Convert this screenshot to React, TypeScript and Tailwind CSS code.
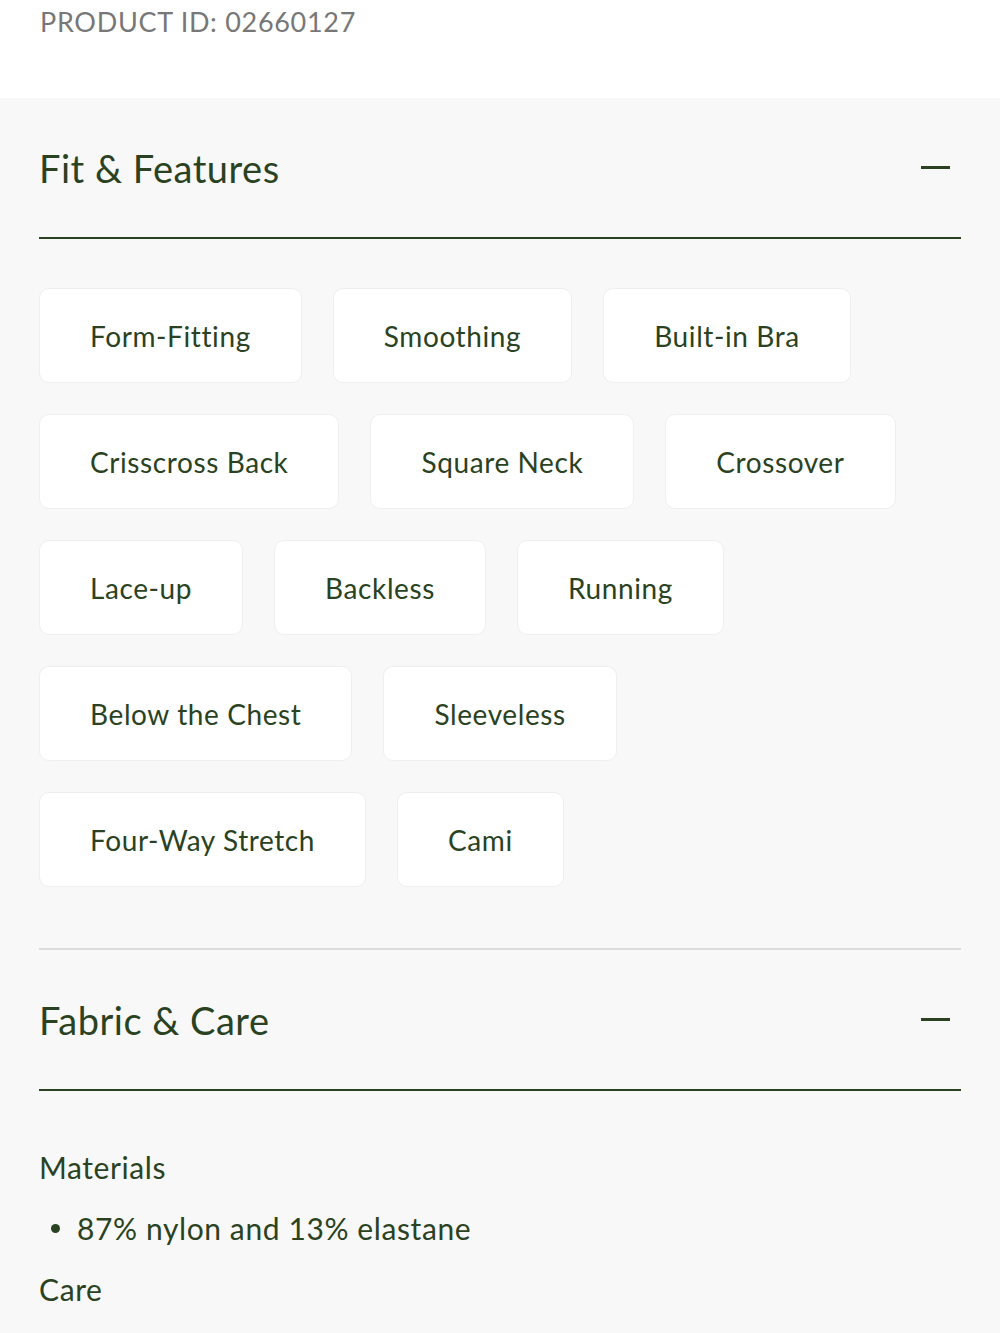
import React from 'react';

const features = [
  ["Form-Fitting", "Smoothing", "Built-in Bra"],
  ["Crisscross Back", "Square Neck", "Crossover"],
  ["Lace-up", "Backless", "Running"],
  ["Below the Chest", "Sleeveless"],
  ["Four-Way Stretch", "Cami"],
];

function SectionHeader({ title }: { title: string }) {
  return (
    <div className="flex items-center justify-between h-[141px] border-b-2 border-[#2a4222]">
      <h2 className="text-[38px] leading-none text-[#2a4222] tracking-[0.5px]">{title}</h2>
      <div className="w-[29px] h-[3px] bg-[#2a4222] mr-[11px]" />
    </div>
  );
}

export default function App() {
  return (
    <div className="w-[1000px] min-h-[1333px] bg-[#f8f8f8] font-['Lato',sans-serif] text-[#2a4222]">
      {/* product id */}
      <div className="bg-white h-[98px] px-10">
        <p className="text-[27px] leading-none pt-[8px] text-[#777777] tracking-[0.7px]">PRODUCT ID: 02660127</p>
      </div>

      <div className="px-[39px]">
        {/* Fit & Features */}
        <SectionHeader title="Fit & Features" />
        <div className="flex flex-col gap-[31px] pt-[49px] pb-[61px] border-b-2 border-[#dcdcdc]">
          {features.map((row, i) => (
            <div key={i} className="flex gap-[31px]">
              {row.map((f) => (
                <div
                  key={f}
                  className="h-[95px] px-[50px] flex items-center bg-white border border-[#efefef] rounded-[10px] text-[28px] tracking-[0.6px]"
                >
                  {f}
                </div>
              ))}
            </div>
          ))}
        </div>

        {/* Fabric & Care */}
        <SectionHeader title="Fabric & Care" />
        <div className="pt-[61px] text-[30px] leading-none tracking-[0.6px]">
          <p>Materials</p>
          <ul className="mt-[31px] ml-[12px] flex flex-col">
            <li className="flex items-center gap-[17px]">
              <span className="w-[9px] h-[9px] rounded-full bg-[#2a4222]" />
              <span>87% nylon and 13% elastane</span>
            </li>
          </ul>
          <p className="mt-[31px]">Care</p>
        </div>
      </div>
    </div>
  );
}
